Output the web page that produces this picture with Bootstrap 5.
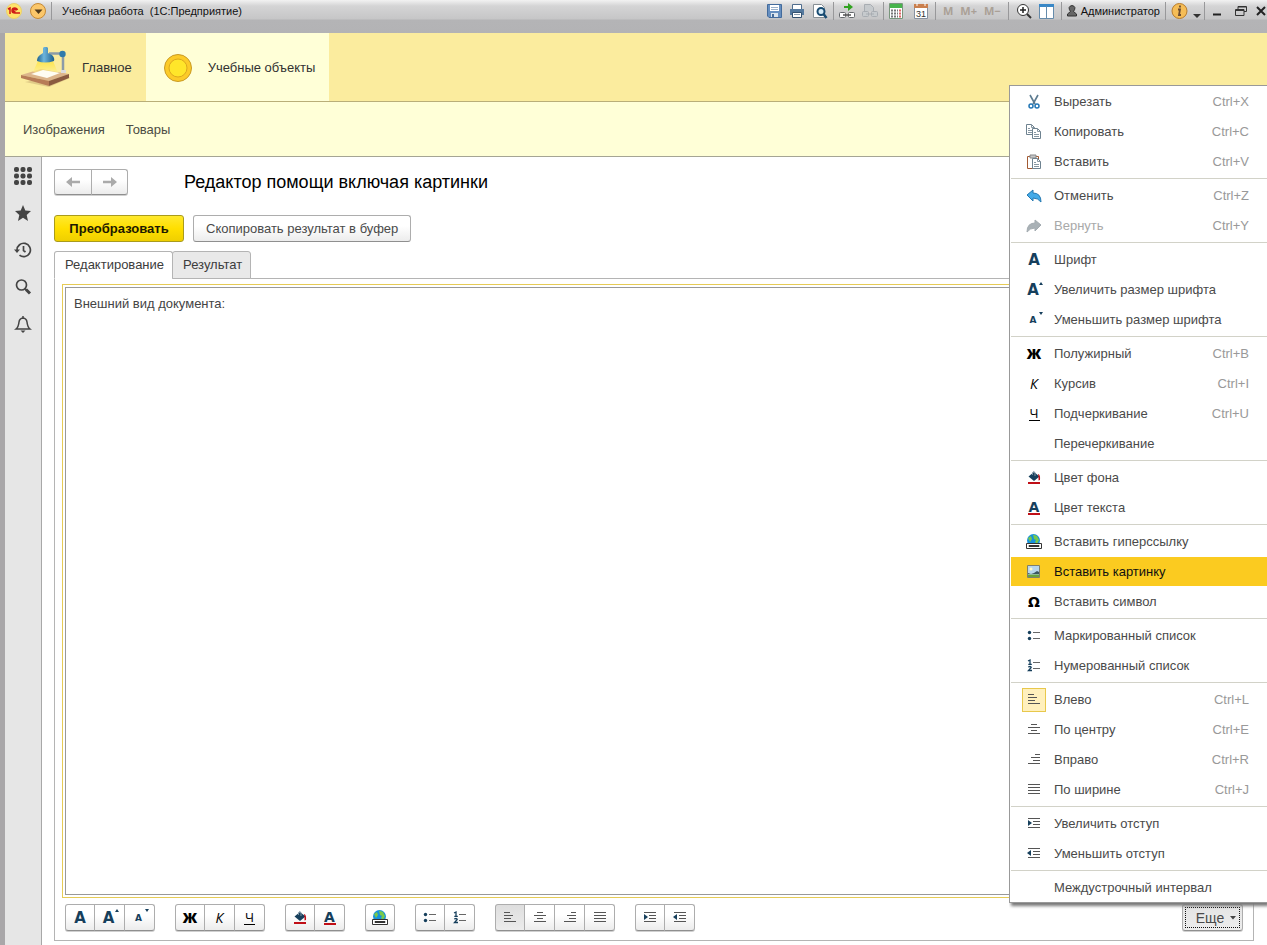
<!DOCTYPE html>
<html lang="ru">
<head>
<meta charset="utf-8">
<meta name="viewport" content="width=device-width, initial-scale=1">
<title>Учебная работа (1С:Предприятие)</title>
<link href="https://cdn.jsdelivr.net/npm/bootstrap@5.3.0/dist/css/bootstrap.min.css" rel="stylesheet">
<style>
body{font-family:"Liberation Sans",Arial,sans-serif;font-size:13px;line-height:16px;color:#444;background:#fff}
button{font:inherit;color:inherit}
a{color:inherit;text-decoration:none}
svg{flex:none;display:block}
.app-window{min-height:100vh;border-left:5px solid #a9a7a9}
.titlebar{height:33px;margin-left:-5px;padding:0 0 11px 6px;background:linear-gradient(#f2f2f2 0,#d4d4d5 6px,#c6c6c7 19px,#b4b4b6 20px,#b3b3b5 33px);font-size:11px;color:#111}
.titlebar button{background:none;border:0;padding:0;display:flex;align-items:center}
.app-caption{white-space:pre;margin-left:10px}
.title-divider{width:1px;height:18px;background:#98989a}
.tool-set{gap:7px}
.memory-key{font-family:"Open Sans",sans-serif;font-size:11px;font-weight:700;color:#aaa096 !important}
.sections{background:#fbec9e;border-bottom:1px solid #b9ae78;height:69px}
.sections a{color:#333;padding:1px 14px 0 16px}
.sections a.active{background:#ffffd7}
.subsections{background:#ffffd7;border-bottom:1px solid #a5a594;height:55px;padding:1px 18px 0;gap:21px;color:#4c4c44}
.side-rail{width:37px;background:#e6e6e6;border-right:1px solid #a8a8a8;padding-top:10px;color:#444;gap:19px}
.side-rail button{border:0;background:none;padding:0;height:18px;width:36px;display:flex;align-items:center;justify-content:center}
.page-body{padding:12px 13px 4px 12px}
.tool-btn{height:27px;border:1px solid #adadad;border-bottom-color:#8f8f8f;border-radius:3px;background:linear-gradient(#fff 40%,#ececec);padding:0 12px;display:flex;align-items:center;justify-content:center;color:#4a4a4a;box-shadow:0 1px 0 #d0d0d0}
.tool-main{background:linear-gradient(#ffe92e,#ffdf00 50%,#efcf00);border-color:#a99b1c;color:#1d1a00;font-weight:700;box-shadow:none;min-width:130px}
.tool-copy{box-shadow:none}
.tool-group{display:flex}
.tool-group .tool-btn{width:31px;padding:0;border-radius:0;margin-left:-1px}
.tool-group .tool-btn:first-child{border-radius:3px 0 0 3px;margin-left:0;width:30px}
.tool-group .tool-btn:last-child{border-radius:0 3px 3px 0}
.tool-group .tool-btn:only-child{border-radius:3px}
.tool-group .tool-btn.active{background:linear-gradient(#dedede,#ececec)}
.tool-group.nav-group .tool-btn{width:38px;height:26px;color:#aaa}
.tool-group.nav-group .tool-btn:last-child{width:37px}
.form-title{font-size:18px;line-height:22px;color:#000;font-weight:400;margin:0}
.form-tabs{margin-bottom:-1px;position:relative}
.form-tabs button{height:28px;border:1px solid #b4b4b4;background:#fff;border-radius:3px 3px 0 0;padding:0 8px 0 10px;color:#3c3c3c}
.form-tabs button.active{border-bottom-color:#fff}
.form-tabs button:not(.active){background:#e9e9e9;margin-left:-1px}
.tab-pane-box{border:1px solid #b4b4b4;padding:5px 6px 9px 7px}
.editor-frame{border:1px solid #e6cb55;padding:2px}
.editor-frame textarea{border:1px solid #999;border-radius:0;resize:none;outline:0;padding:8px;font:inherit;color:#444;width:100%;display:block}
.editor-tools{margin-top:6px;padding:0 0 0 3px;gap:20px}
.glyph{width:16px;height:16px;flex:none;display:flex;align-items:center;justify-content:center;font-family:"DejaVu Sans",sans-serif;font-size:14px;line-height:16px;color:#000}
.glyph-a{color:#163f5c;font-weight:700;font-size:15px}
.glyph-small{font-size:9px}
.glyph-b{font-family:"Open Sans",sans-serif;font-weight:800}
.glyph-i{font-family:"Open Sans",sans-serif;font-style:italic}
.glyph-u{font-size:13px;font-family:"Open Sans",sans-serif;border-bottom:1px solid #000;width:11px;height:14px}
.color-a{width:12px;height:14px;font-size:14px;border-bottom:2px solid #c00f17;line-height:12px}
.size-mark{width:4px;height:3px;align-self:flex-start;margin:4px 0 0 -2px}
.size-mark.down{transform:scaleY(-1)}
.more-btn{width:61px;font-size:14px;background:linear-gradient(#e4e4e4,#ededed);padding:0 0 0 7px;position:relative;gap:6px;margin-right:4px}
.more-btn span{border:1px dotted #111;position:absolute;inset:2px}
.more-menu{display:block;right:-20px;bottom:28px;left:auto;top:auto;width:258px;border:1px solid #999;border-right:0;border-radius:0;padding:0 0 0 1px;font-size:13px;color:#444;box-shadow:2px 3px 3px #777;clip-path:inset(0 0 -8px 0)}
.more-menu .dropdown-item{height:30px;padding:0 18px 0 11px;display:flex;align-items:center;color:#4a4a4a;gap:8px;border:solid #fff;border-width:1px 0 0}
.more-menu .dropdown-item.chosen{background:#fbcb20;color:#111}
.more-menu .dropdown-item:disabled{color:#a9a9a9}
.more-menu kbd{margin-left:auto;background:none;color:#999;font:inherit;padding:0}
.more-menu .dropdown-divider{margin:2px 0 1px;border-top:1px solid #d2d2c8;opacity:1}
.mark-box{width:24px;height:24px;display:flex;align-items:center;justify-content:center;flex:none}
.mark-box.checked{background:#fff0bd;border:1px solid #e8c84c}
</style>
</head>
<body>
<svg class="d-none" xmlns="http://www.w3.org/2000/svg">
<symbol id="i-al" viewBox="0 0 16 16"><path d="M2 2.500h6M2 5.500h9M2 8.500h7M2 11.500h12" stroke="#555" fill="none"/></symbol>
<symbol id="i-ac" viewBox="0 0 16 16"><path d="M5 2.500h6M2 5.500h12M5 8.500h6M2 11.500h12" stroke="#555" fill="none"/></symbol>
<symbol id="i-ar" viewBox="0 0 16 16"><path d="M9 2.500h5M5 5.500h9M7 8.500h7M2 11.500h12" stroke="#555" fill="none"/></symbol>
<symbol id="i-aj" viewBox="0 0 16 16"><path d="M2 2.500h12M2 5.500h12M2 8.500h12M2 11.500h12" stroke="#555" fill="none"/></symbol>
<symbol id="i-in" viewBox="0 0 16 16"><path d="M2 2.500h12M7 5.500h7M7 8.500h7M2 11.500h12" stroke="#555" fill="none"/><path d="M2 4v6l4-3z" fill="#163f5c"/></symbol>
<symbol id="i-out" viewBox="0 0 16 16"><path d="M2 2.500h12M7 5.500h7M7 8.500h7M2 11.500h12" stroke="#555" fill="none"/><path d="M5 4v6L1 7z" fill="#163f5c"/></symbol>
<symbol id="i-ul" viewBox="0 0 16 16"><path d="M7 4.500h7M7 10.500h7" stroke="#666"/><circle cx="3.500" cy="4.500" r="1.700" fill="#163f5c"/><circle cx="3.500" cy="10.500" r="1.700" fill="#163f5c"/></symbol>
<symbol id="i-ol" viewBox="0 0 16 16"><path d="M7 4.500h7M7 10.500h7" stroke="#666"/><path d="M2 3l2-1v4.500M2.300 6.300h3.500M2.200 9q3-1.200 3 .5L2.500 12.500h3.500" fill="none" stroke="#163f5c" stroke-width="1.300"/></symbol>
<symbol id="i-fill" viewBox="0 0 16 16"><path d="M8 2l5.500 4.500L8 11 2.500 6.500z" fill="#163f5c"/><path d="M6.500 5V2.500q1-2 2.500 0V6" fill="none" stroke="#8096a5"/><path d="M12 4q2.500.5 2 6l-1.500.5V7z" fill="#c00f17"/><path d="M2 12h12v2H2z" fill="#c00f17"/></symbol>
<symbol id="i-up" viewBox="0 0 4 3"><path d="M0 3h4L2 0z" fill="#163f5c"/></symbol>
<symbol id="i-link" viewBox="0 0 16 16"><circle cx="7.500" cy="6.500" r="6.500" fill="#1692dc"/><path d="M7 .5l4 1.500 2 4-2 4-2-2 1-2-2-1zM2 4l3-2 1 3-2 3z" fill="#79c94b"/><path d="M.5 9.500h15v5H.5z" fill="#fff" stroke="#333"/><path d="M3 11.500h3v1H3zM10 11.500h3v1h-3z" fill="none" stroke="#333"/><path d="M6 12h4" stroke="#333" stroke-width="2"/></symbol>
<symbol id="i-pic" viewBox="0 0 16 16"><path d="M1.500 1.500h12v12h-12z" fill="#b8d6ec" stroke="#80806a"/><path d="M2 9l3 1 3-1 3-2 2 1v2H2z" fill="#3c5663"/><path d="M2 10.500h11V13H2z" fill="#69a33d"/><circle cx="5" cy="5" r="1.500" fill="#fff9c5"/></symbol>
<symbol id="i-doc" viewBox="0 0 9 11"><path d="M.5.5h5l3 3v7h-8z" fill="#fff" stroke="#6e8290"/><path d="M5.500.5v3h3M2 4.500h2M2 6.500h5M2 8.500h5" fill="none" stroke="#8797a2"/></symbol>
<symbol id="i-undo" viewBox="0 0 16 16"><path d="M1 7l6-5v3q8 0 8 9-3-4-8-4v3z"/></symbol>
<symbol id="i-arrow" viewBox="0 0 16 12"><path d="M1 6l6-5v3.700h8v2.600H7V11z" fill="#aaa"/></symbol>
</svg>

<div class="app-window d-flex flex-column">
<header class="titlebar d-flex align-items-center">
  <button type="button" aria-label="1С"><svg width="16" height="18" viewBox="0 0 16 18"><circle cx="8" cy="9" r="7.500" fill="#ffe36a" stroke="#ead06d"/><path d="M2 7l2-1v6M11.500 8Q11 6 9 6 6 6 6 8.700q0 2.300 3 2.300h5M10.500 8.500Q10 7.500 9 7.500 7.500 7.500 7.500 9q0 1 2 .8" fill="none" stroke="#cf1c17" stroke-width="1.500"/></svg></button>
  <button type="button" class="ms-2" aria-label="Главное меню"><svg width="17" height="18" viewBox="0 0 17 18"><circle cx="8" cy="9" r="7.500" fill="#fbc76a" stroke="#c68a36"/><path d="M4.500 7.500h8L8.500 12z" fill="#503a1c"/></svg></button>
  <div class="title-divider ms-1"></div>
  <div class="app-caption">Учебная работа  (1С:Предприятие)</div>
  <div class="d-flex align-items-center tool-set ms-auto">
    <button type="button" aria-label="Сохранить"><svg width="15" height="16" viewBox="0 0 15 16"><path d="M.5 1.500h14v13H2l-1.500-1.500z" fill="#668fc0" stroke="#436b9c"/><path d="M3 2h9v6H3z" fill="#fff"/><path d="M4 4.500h7M4 6.500h7" stroke="#9ab0ca"/><path d="M4 10h7v4H4z" fill="#dce6ef"/><path d="M5 11h2v3H5z" fill="#476c99"/></svg></button>
    <button type="button" aria-label="Печать"><svg width="16" height="16" viewBox="0 0 16 16"><path d="M3.500 1.500h9v5h-9z" fill="#fff" stroke="#506d8d"/><path d="M1 6h14v6H1z" fill="#54799e"/><path d="M3.500 9.500h9v5h-9z" fill="#fff" stroke="#33516f"/><path d="M5 11.500h6" stroke="#89a"/></svg></button>
    <button type="button" aria-label="Просмотр"><svg width="16" height="16" viewBox="0 0 16 16"><path d="M1.500 1.500h8l3 3v10h-11z" fill="#fff" stroke="#878f94"/><circle cx="9" cy="8.500" r="3.500" fill="#d5eaf6" stroke="#194c72" stroke-width="2"/><path d="M11.500 11l3 4" stroke="#194c72" stroke-width="2.500"/></svg></button>
    <div class="title-divider" style="margin:0 -2px"></div>
    <button type="button" aria-label="Получить ссылку"><svg width="16" height="16" viewBox="0 0 16 16"><path d="M5 3h4V0l5 4-5 4V5H5z" fill="#32a321"/><rect x=".5" y="9.500" width="6" height="5" rx="1" fill="#fff" stroke="#65696c"/><rect x="9.500" y="9.500" width="6" height="5" rx="1" fill="#fff" stroke="#65696c"/><path d="M4 12h8" stroke="#555" stroke-width="1.500"/></svg></button>
    <button type="button" aria-label="Перейти по ссылке"><svg width="16" height="16" viewBox="0 0 16 16" fill="#c6cacd" stroke="#a8adb2"><path d="M2.500 8V1.500h6l3 3V8"/><rect x=".5" y="8.500" width="6" height="5" rx="1"/><rect x="9.500" y="8.500" width="6" height="5" rx="1"/><path d="M4 11h8"/></svg></button>
    <div class="title-divider" style="margin:0 -2px"></div>
    <button type="button" aria-label="Калькулятор"><svg width="14" height="16" viewBox="0 0 14 16"><path d="M.5.500h13v15H.5z" fill="#fff" stroke="#78967c"/><path d="M1 1h12v4H1z" fill="#47b44b"/><path d="M2 7.500h7M2 10.500h7M2 13.500h7" stroke="#777" stroke-width="2" stroke-dasharray="2 1"/><path d="M11 6.500v8" stroke="#d66" stroke-width="2" stroke-dasharray="2 1"/></svg></button>
    <button type="button" class="ms-1" aria-label="Календарь"><svg width="14" height="16" viewBox="0 0 14 16"><path d="M.5 2.500h13v13H.5z" fill="#fff" stroke="#8791a0"/><path d="M0 1h14v4H0z" fill="#ca7f4d"/><path d="M3 0v3M11 0v3" stroke="#fff"/><text x="7" y="13.500" font-size="9" text-anchor="middle" fill="#333">31</text></svg></button>
    <div class="title-divider"></div>
    <button type="button" class="memory-key">M</button>
    <button type="button" class="memory-key">M+</button>
    <button type="button" class="memory-key">M−</button>
    <div class="title-divider"></div>
    <button type="button" aria-label="Масштаб"><svg width="16" height="16" viewBox="0 0 16 16"><circle cx="7" cy="7" r="5.500" fill="#fff" stroke="#333"/><path d="M4 7h6M7 4v6" stroke="#222" stroke-width="1.500"/><path d="M11 11l4 4" stroke="#333" stroke-width="2"/></svg></button>
    <button type="button" aria-label="Панели"><svg width="15" height="15" viewBox="0 0 15 15"><path d="M.5.500h14v14H.5z" fill="#fff" stroke="#658bab"/><path d="M0 0h15v3H0z" fill="#3988c7"/><path d="M7.500 2v12" stroke="#658bab"/></svg></button>
    <div class="title-divider"></div>
    <button type="button" style="margin:0 -2px"><svg width="10" height="12" viewBox="0 0 10 12" class="me-1"><path d="M5 .5q5 1 1.500 6L9.500 9v2h-9V9l3-2.500Q0 1.500 5 .5z" fill="#666" stroke="#333"/></svg>Администратор</button>
    <div class="title-divider" style="margin:0 -2px 0 0"></div>
    <button type="button" aria-label="Справка"><svg width="31" height="18" viewBox="0 0 31 18"><circle cx="8.500" cy="9" r="7.500" fill="#f5bd57" stroke="#b87b2b"/><path d="M9 3.500v2M7 7.500h2L8 13h2" fill="none" stroke="#6b4c32" stroke-width="1.800"/><path d="M22 12h8l-4 4z" fill="#333"/></svg></button>
    <div class="title-divider" style="margin:0 -5px"></div>
    <button type="button" aria-label="Свернуть" class="ms-1"><svg width="12" height="12" viewBox="0 0 12 12"><path d="M2 9.500h8" stroke="#222" stroke-width="2"/></svg></button>
    <button type="button" aria-label="Восстановить" class="ms-1"><svg width="14" height="12" viewBox="0 0 14 12"><path d="M4 4V1.500h8.500v5H10M1.500 4.500H10v6H1.500zM1.500 5.500H10M4 2h8" fill="none" stroke="#333"/></svg></button>
    <button type="button" aria-label="Закрыть"><svg width="12" height="12" viewBox="0 0 12 12"><path d="M2 2l8 8M10 2l-8 8" stroke="#222" stroke-width="2"/></svg></button>
  </div>
</header>

<nav class="sections d-flex">
  <a href="#" class="d-flex align-items-center">
    <svg width="49" height="42" viewBox="0 1 49 42" style="margin-right:12px"><defs><linearGradient id="g-ray" x2="0" y2="1"><stop stop-color="#ffe01c"/><stop offset="1" stop-color="#fff7b8"/></linearGradient><linearGradient id="g-lamp"><stop stop-color="#1d638f"/><stop offset=".4" stop-color="#6db5dc"/><stop offset="1" stop-color="#1c5f8c"/></linearGradient></defs><path d="M4 36l24 5 21-9-4-4z" fill="#c5a970" opacity=".5"/><path d="M0 29l20-6 28 5-20 7z" fill="#dcb58b"/><path d="M0 29v3l28 8v-5z" fill="#b77c57"/><path d="M28 35l20-7v4l-20 8z" fill="#8a5b40"/><path d="M17 15h15l5 12-12 4-13-5z" fill="url(#g-ray)" opacity=".6"/><path d="M10 28l12-4 17 3-13 5z" fill="#fffdf2"/><path d="M28 7.500h13M42 9v16" stroke="#8c9ca8" stroke-width="2.500"/><path d="M40 24h5v3h-5z" fill="#ddd"/><path d="M22 2l1-1h3l1 1v5l4 2q3 3 2 6-9 3-17 0 0-4 3-6l3-2z" fill="url(#g-lamp)"/><circle cx="41.500" cy="8" r="3.200" fill="#2f7bab"/></svg>Главное</a>
  <a href="#" class="active d-flex align-items-center">
    <svg width="31" height="30" viewBox="0 0 31 30" style="margin-right:15px"><circle cx="16" cy="15" r="13.500" fill="#fccb28" stroke="#c99a25"/><circle cx="16" cy="15" r="9" fill="#ffe62a" stroke="#dda91d"/></svg>Учебные объекты</a>
</nav>
<nav class="subsections d-flex align-items-center"><a href="#">Изображения</a><a href="#">Товары</a></nav>

<div class="d-flex flex-grow-1">
<aside class="side-rail d-flex flex-column flex-shrink-0">
  <button type="button" aria-label="Меню"><svg width="18" height="18" viewBox="0 0 18 18" fill="#444"><g id="dots-row"><rect width="5" height="5" rx="2"/><rect x="6.500" width="5" height="5" rx="2"/><rect x="13" width="5" height="5" rx="2"/></g><use href="#dots-row" y="6.500"/><use href="#dots-row" y="13"/></svg></button>
  <button type="button" aria-label="Избранное"><svg width="18" height="18" viewBox="0 0 18 18"><path d="M9 1l2.300 5.500 5.700.5-4.300 4 1.300 6-5-3.200L4 17l1.300-6L1 7l5.700-.5z" fill="#444"/></svg></button>
  <button type="button" aria-label="История"><svg width="18" height="18" viewBox="0 0 18 18" fill="none" stroke="#444" stroke-width="1.700"><path d="M3 9a6.700 6.700 0 1 1 2.500 5.200M9.500 5v4.500l2 1.500"/><path d="M0 8.500h6L3 12z" fill="#444" stroke="none"/></svg></button>
  <button type="button" aria-label="Поиск"><svg width="18" height="18" viewBox="0 0 18 18" fill="none" stroke="#444"><circle cx="7.500" cy="7" r="5" stroke-width="1.700"/><path d="M11 10.500l1.500 1.500" stroke-width="1.500"/><path d="M12 11.500l4 4" stroke-width="3"/></svg></button>
  <button type="button" aria-label="Уведомления"><svg width="18" height="18" viewBox="0 0 18 18"><path d="M2 14q2.500-2 3-7 .5-3.500 4-4 3.500.5 4 4 .5 5 3 7zM9 3V1" fill="none" stroke="#444" stroke-width="1.500"/><path d="M6.500 15.500h5L9 18z" fill="#444"/></svg></button>
</aside>
<main class="page-body d-flex flex-column flex-grow-1">
  <div class="d-flex align-items-center" style="height:26px;margin-bottom:20px">
    <div class="tool-group nav-group"><button type="button" class="tool-btn" aria-label="Назад"><svg width="16" height="12"><use href="#i-arrow"/></svg></button><button type="button" class="tool-btn" aria-label="Вперед"><svg width="16" height="12" style="transform:scaleX(-1)"><use href="#i-arrow"/></svg></button></div>
    <h1 class="form-title ms-5 ps-2">Редактор помощи включая картинки</h1>
  </div>
  <div class="d-flex" style="margin-bottom:9px;gap:9px"><button type="button" class="tool-btn tool-main">Преобразовать</button><button type="button" class="tool-btn tool-copy">Скопировать результат в буфер</button></div>
  <div class="form-tabs d-flex" role="tablist"><button type="button" role="tab" aria-selected="true" class="active">Редактирование</button><button type="button" role="tab" aria-selected="false">Результат</button></div>
  <section class="tab-pane-box d-flex flex-column flex-grow-1">
    <div class="editor-frame d-flex flex-grow-1"><textarea aria-label="Редактирование" spellcheck="false">Внешний вид документа:</textarea></div>
    <div class="editor-tools d-flex align-items-center">
      <div class="tool-group"><button type="button" class="tool-btn"><span class="glyph glyph-a">A</span></button><button type="button" class="tool-btn"><span class="glyph glyph-a">A</span><svg class="size-mark"><use href="#i-up"/></svg></button><button type="button" class="tool-btn"><span class="glyph glyph-a glyph-small">A</span><svg class="size-mark down"><use href="#i-up"/></svg></button></div>
      <div class="tool-group"><button type="button" class="tool-btn"><b class="glyph glyph-b">Ж</b></button><button type="button" class="tool-btn"><span class="glyph glyph-i">К</span></button><button type="button" class="tool-btn"><span class="glyph glyph-u">Ч</span></button></div>
      <div class="tool-group"><button type="button" class="tool-btn" aria-label="Цвет фона"><svg width="16" height="16"><use href="#i-fill"/></svg></button><button type="button" class="tool-btn"><span class="glyph glyph-a color-a">A</span></button></div>
      <div class="tool-group"><button type="button" class="tool-btn" aria-label="Гиперссылка"><svg width="16" height="16"><use href="#i-link"/></svg></button></div>
      <div class="tool-group"><button type="button" class="tool-btn" aria-label="Маркированный список"><svg width="16" height="16"><use href="#i-ul"/></svg></button><button type="button" class="tool-btn" aria-label="Нумерованный список"><svg width="16" height="16"><use href="#i-ol"/></svg></button></div>
      <div class="tool-group"><button type="button" class="tool-btn active" aria-label="Влево"><svg width="16" height="16"><use href="#i-al"/></svg></button><button type="button" class="tool-btn" aria-label="По центру"><svg width="16" height="16"><use href="#i-ac"/></svg></button><button type="button" class="tool-btn" aria-label="Вправо"><svg width="16" height="16"><use href="#i-ar"/></svg></button><button type="button" class="tool-btn" aria-label="По ширине"><svg width="16" height="16"><use href="#i-aj"/></svg></button></div>
      <div class="tool-group"><button type="button" class="tool-btn" aria-label="Увеличить отступ"><svg width="16" height="16"><use href="#i-in"/></svg></button><button type="button" class="tool-btn" aria-label="Уменьшить отступ"><svg width="16" height="16"><use href="#i-out"/></svg></button></div>
      <div class="dropup ms-auto position-relative">
        <button type="button" class="tool-btn more-btn" aria-expanded="true">Еще<svg width="6" height="4" viewBox="0 0 6 4"><path d="M0 0h6L3 3.500z" fill="#444"/></svg><span></span></button>
        <div class="dropdown-menu more-menu show">
          <button type="button" class="dropdown-item"><span class="mark-box"><svg width="16" height="16" viewBox="0 0 16 16" fill="none"><path d="M4 1l5 9M12 1L7 10" stroke="#5c7b90" stroke-width="1.600"/><circle cx="5" cy="12" r="2" stroke="#2276b5" stroke-width="1.500"/><circle cx="11" cy="12" r="2" stroke="#2276b5" stroke-width="1.500"/></svg></span>Вырезать<kbd>Ctrl+X</kbd></button>
          <button type="button" class="dropdown-item"><span class="mark-box"><svg width="16" height="16"><use href="#i-doc" width="9" height="11"/><use href="#i-doc" x="6" y="4" width="9" height="11"/></svg></span>Копировать<kbd>Ctrl+C</kbd></button>
          <button type="button" class="dropdown-item"><span class="mark-box"><svg width="16" height="16"><path d="M1.500 2.500h11v12h-11z" fill="#fff" stroke="#a35a32"/><path d="M4 1h6v3H4z" fill="#c5c7c8" stroke="#888"/><use href="#i-doc" x="6" y="4" width="9" height="11"/></svg></span>Вставить<kbd>Ctrl+V</kbd></button>
          <hr class="dropdown-divider">
          <button type="button" class="dropdown-item"><span class="mark-box"><svg width="16" height="16" fill="#43aae8" stroke="#2479b1"><use href="#i-undo"/></svg></span>Отменить<kbd>Ctrl+Z</kbd></button>
          <button type="button" class="dropdown-item" disabled><span class="mark-box"><svg width="16" height="16" fill="#a9b1b6" stroke="#a3abb0" style="transform:scaleX(-1)"><use href="#i-undo"/></svg></span>Вернуть<kbd>Ctrl+Y</kbd></button>
          <hr class="dropdown-divider">
          <button type="button" class="dropdown-item"><span class="mark-box"><span class="glyph glyph-a">A</span></span>Шрифт</button>
          <button type="button" class="dropdown-item"><span class="mark-box"><span class="glyph glyph-a">A</span><svg class="size-mark"><use href="#i-up"/></svg></span>Увеличить размер шрифта</button>
          <button type="button" class="dropdown-item"><span class="mark-box"><span class="glyph glyph-a glyph-small">A</span><svg class="size-mark down"><use href="#i-up"/></svg></span>Уменьшить размер шрифта</button>
          <hr class="dropdown-divider">
          <button type="button" class="dropdown-item"><span class="mark-box"><b class="glyph glyph-b">Ж</b></span>Полужирный<kbd>Ctrl+B</kbd></button>
          <button type="button" class="dropdown-item"><span class="mark-box"><span class="glyph glyph-i">К</span></span>Курсив<kbd>Ctrl+I</kbd></button>
          <button type="button" class="dropdown-item"><span class="mark-box"><span class="glyph glyph-u">Ч</span></span>Подчеркивание<kbd>Ctrl+U</kbd></button>
          <button type="button" class="dropdown-item"><span class="mark-box"></span>Перечеркивание</button>
          <hr class="dropdown-divider">
          <button type="button" class="dropdown-item"><span class="mark-box"><svg width="16" height="16"><use href="#i-fill"/></svg></span>Цвет фона</button>
          <button type="button" class="dropdown-item"><span class="mark-box"><span class="glyph glyph-a color-a">A</span></span>Цвет текста</button>
          <hr class="dropdown-divider">
          <button type="button" class="dropdown-item"><span class="mark-box"><svg width="16" height="16"><use href="#i-link"/></svg></span>Вставить гиперссылку</button>
          <button type="button" class="dropdown-item chosen"><span class="mark-box"><svg width="16" height="16"><use href="#i-pic"/></svg></span>Вставить картинку</button>
          <button type="button" class="dropdown-item"><span class="mark-box"><b class="glyph">Ω</b></span>Вставить символ</button>
          <hr class="dropdown-divider">
          <button type="button" class="dropdown-item"><span class="mark-box"><svg width="16" height="16"><use href="#i-ul"/></svg></span>Маркированный список</button>
          <button type="button" class="dropdown-item"><span class="mark-box"><svg width="16" height="16"><use href="#i-ol"/></svg></span>Нумерованный список</button>
          <hr class="dropdown-divider">
          <button type="button" class="dropdown-item"><span class="mark-box checked"><svg width="16" height="16"><use href="#i-al"/></svg></span>Влево<kbd>Ctrl+L</kbd></button>
          <button type="button" class="dropdown-item"><span class="mark-box"><svg width="16" height="16"><use href="#i-ac"/></svg></span>По центру<kbd>Ctrl+E</kbd></button>
          <button type="button" class="dropdown-item"><span class="mark-box"><svg width="16" height="16"><use href="#i-ar"/></svg></span>Вправо<kbd>Ctrl+R</kbd></button>
          <button type="button" class="dropdown-item"><span class="mark-box"><svg width="16" height="16"><use href="#i-aj"/></svg></span>По ширине<kbd>Ctrl+J</kbd></button>
          <hr class="dropdown-divider">
          <button type="button" class="dropdown-item"><span class="mark-box"><svg width="16" height="16"><use href="#i-in"/></svg></span>Увеличить отступ</button>
          <button type="button" class="dropdown-item"><span class="mark-box"><svg width="16" height="16"><use href="#i-out"/></svg></span>Уменьшить отступ</button>
          <hr class="dropdown-divider">
          <button type="button" class="dropdown-item"><span class="mark-box"></span>Междустрочный интервал</button>
        </div>
      </div>
    </div>
  </section>
</main>
</div>
</div>
<script src="https://cdn.jsdelivr.net/npm/bootstrap@5.3.0/dist/js/bootstrap.bundle.min.js"></script>
</body>
</html>
